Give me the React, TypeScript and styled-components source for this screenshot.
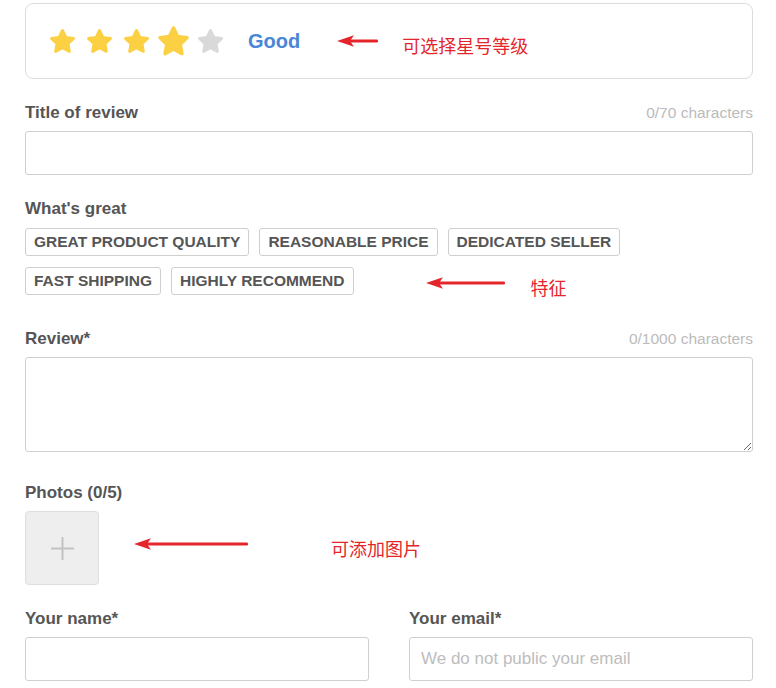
import React from "react";
import styled, { createGlobalStyle } from "styled-components";

const Global = createGlobalStyle`
  html, body { margin: 0; padding: 0; background: #fff; }
  body { font-family: "Liberation Sans", Arial, sans-serif; color: #555; }
  * { box-sizing: border-box; }
`;

const Page = styled.div`
  width: 728px;
  margin: 3px 0 0 25px;
  display: flex;
  flex-direction: column;
`;

const RatingBox = styled.div`
  height: 76px;
  border: 1px solid #dcdcdc;
  border-radius: 8px;
  padding-left: 23px;
  display: flex;
  align-items: center;
`;

const Stars = styled.div`
  display: flex;
  gap: 10px;
`;

const StarIcon = styled.svg<{ $on: boolean; $big?: boolean }>`
  width: 27px;
  height: 27px;
  display: block;
  transform: ${(p) => (p.$big ? "scale(1.22)" : "none")};
  fill: ${(p) => (p.$on ? "#fcd043" : "#d9d9d9")};
  stroke: ${(p) => (p.$on ? "#fcd043" : "#d9d9d9")};
`;

const RatingWord = styled.span`
  margin-left: 24px;
  font-size: 20px;
  font-weight: 700;
  color: #4a86d8;
`;

const Note = styled.div<{ $gap: number; $lift: number }>`
  display: flex;
  align-items: center;
  height: 24px;
  margin-left: ${(p) => p.$gap}px;
  transform: translateY(${(p) => -p.$lift}px);
`;

const NoteText = styled.span<{ $gap: number }>`
  margin-left: ${(p) => p.$gap}px;
  transform: translateY(4px);
  font-family: "Noto Sans CJK SC", "Liberation Sans", sans-serif;
  font-size: 18px;
  line-height: 24px;
  color: #e4262c;
  white-space: nowrap;
`;

const Field = styled.div<{ $top: number }>`
  margin-top: ${(p) => p.$top}px;
  display: flex;
  flex-direction: column;
`;

const LabelRow = styled.div`
  height: 20px;
  display: flex;
  align-items: center;
  justify-content: space-between;
  margin-bottom: 8px;
`;

const Label = styled.label`
  font-size: 17px;
  font-weight: 700;
  color: #555;
`;

const Counter = styled.span`
  font-size: 15.5px;
  color: #bbb;
`;

const TextInput = styled.input`
  width: 100%;
  height: 44px;
  border: 1px solid #cfcfcf;
  border-radius: 3px;
  padding: 0 11px;
  font-family: "Liberation Sans", Arial, sans-serif;
  font-size: 17px;
  color: #555;
  outline: none;
  &::placeholder { color: #bdbdbd; }
`;

const TextArea = styled.textarea`
  display: block;
  width: 100%;
  height: 95px;
  border: 1px solid #cfcfcf;
  border-radius: 3px;
  padding: 8px 11px;
  font-family: "Liberation Sans", Arial, sans-serif;
  font-size: 17px;
  outline: none;
  resize: vertical;
`;

const Tags = styled.div`
  display: flex;
  flex-wrap: wrap;
  align-items: center;
  column-gap: 10px;
  row-gap: 11px;
  margin-top: 1px;
`;

const Tag = styled.button`
  height: 28px;
  padding: 0 8px;
  border: 1px solid #cfcfcf;
  border-radius: 3px;
  background: #fff;
  font-family: "Liberation Sans", Arial, sans-serif;
  font-size: 15.5px;
  font-weight: 700;
  color: #555;
  text-transform: uppercase;
  white-space: nowrap;
`;

const PhotoRow = styled.div`
  display: flex;
  align-items: center;
`;

const Upload = styled.button`
  width: 74px;
  height: 74px;
  border: 1px solid #dedede;
  border-radius: 4px;
  background: #eeeeee;
  display: flex;
  align-items: center;
  justify-content: center;
  padding: 0;
`;

const TwoCols = styled.div`
  margin-top: 24px;
  display: grid;
  grid-template-columns: 1fr 1fr;
  column-gap: 40px;
`;

const ColField = styled.div`
  display: flex;
  flex-direction: column;
`;

function Star({ on, big }: { on: boolean; big?: boolean }) {
  return (
    <StarIcon viewBox="0 0 24 24" $on={on} $big={big}>
      <polygon
        points="12,2.2 15,8.4 21.8,9.3 16.9,14 18.1,20.8 12,17.5 5.9,20.8 7.1,14 2.2,9.3 9,8.4"
        strokeWidth="2.6"
        strokeLinejoin="round"
      />
    </StarIcon>
  );
}

function Arrow({ length }: { length: number }) {
  return (
    <svg width={length} height="14" viewBox={`0 0 ${length} 14`} style={{ display: "block" }}>
      <rect x="8" y="5.5" width={length - 9} height="3" rx="1.2" fill="#e4262c" />
      <path d="M0 7 L17 1.2 L13 7 L17 12.8 Z" fill="#e4262c" />
    </svg>
  );
}

const TAGS = [
  "Great product quality",
  "Reasonable price",
  "Dedicated seller",
  "Fast shipping",
  "Highly recommend",
];

export default function App() {
  return (
    <>
      <Global />
      <Page>
        <RatingBox>
          <Stars>
            {[1, 2, 3, 4, 5].map((n) => (
              <Star key={n} on={n <= 4} big={n === 4} />
            ))}
          </Stars>
          <RatingWord>Good</RatingWord>
          <Note $gap={37} $lift={0}>
            <Arrow length={42} />
            <NoteText $gap={23}>可选择星号等级</NoteText>
          </Note>
        </RatingBox>

        <Field $top={24}>
          <LabelRow>
            <Label>Title of review</Label>
            <Counter>0/70 characters</Counter>
          </LabelRow>
          <TextInput type="text" />
        </Field>

        <Field $top={24}>
          <LabelRow>
            <Label>What's great</Label>
          </LabelRow>
          <Tags>
            {TAGS.map((t) => (
              <Tag key={t}>{t}</Tag>
            ))}
            <Note $gap={62} $lift={-2}>
              <Arrow length={80} />
              <NoteText $gap={25}>特征</NoteText>
            </Note>
          </Tags>
        </Field>

        <Field $top={34}>
          <LabelRow>
            <Label>Review*</Label>
            <Counter>0/1000 characters</Counter>
          </LabelRow>
          <TextArea />
        </Field>

        <Field $top={31}>
          <LabelRow>
            <Label>Photos (0/5)</Label>
          </LabelRow>
          <PhotoRow>
            <Upload aria-label="Add photo">
              <svg width="23" height="23" viewBox="0 0 23 23">
                <rect x="10.5" y="0" width="2" height="23" fill="#c2c2c2" />
                <rect x="0" y="10.5" width="23" height="2" fill="#c2c2c2" />
              </svg>
            </Upload>
            <Note $gap={35} $lift={4}>
              <Arrow length={115} />
              <NoteText $gap={82}>可添加图片</NoteText>
            </Note>
          </PhotoRow>
        </Field>

        <TwoCols>
          <ColField>
            <LabelRow>
              <Label>Your name*</Label>
            </LabelRow>
            <TextInput type="text" />
          </ColField>
          <ColField>
            <LabelRow>
              <Label>Your email*</Label>
            </LabelRow>
            <TextInput type="email" placeholder="We do not public your email" />
          </ColField>
        </TwoCols>
      </Page>
    </>
  );
}
